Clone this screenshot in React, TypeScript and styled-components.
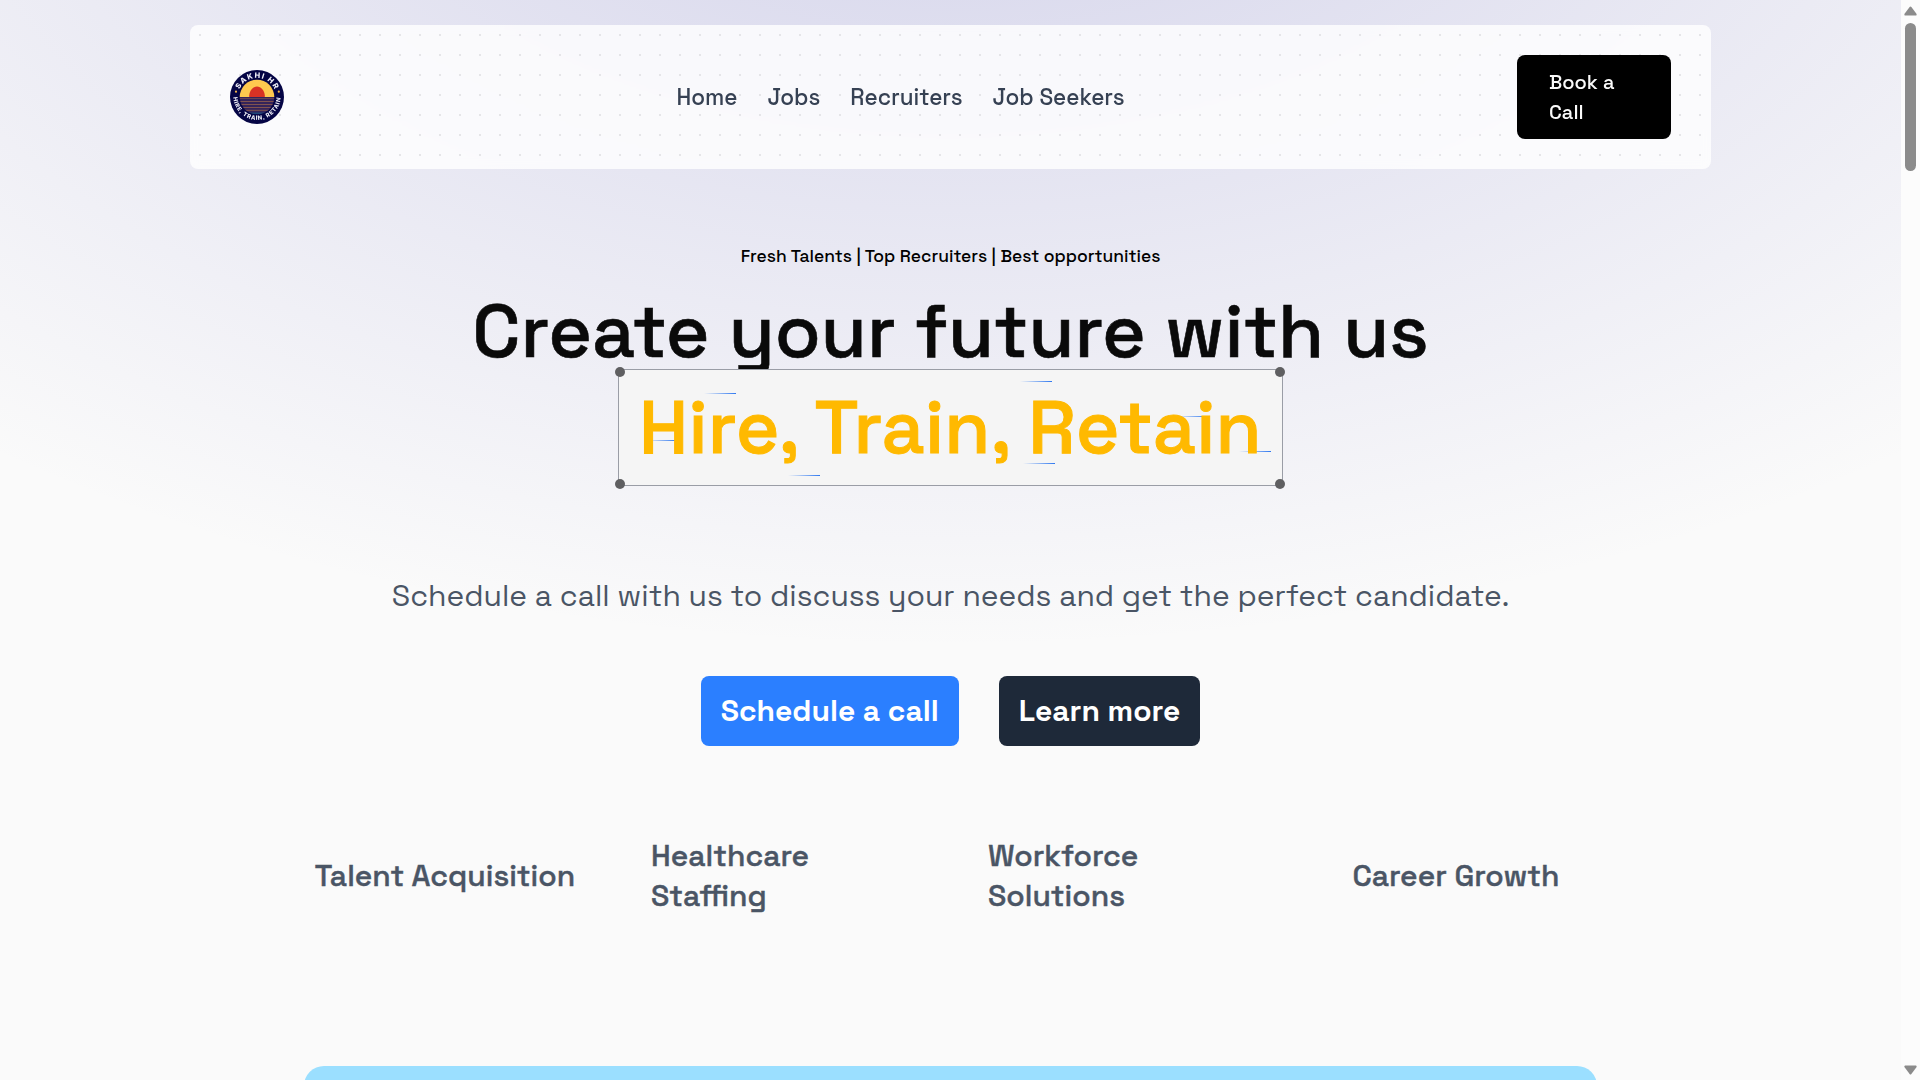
import React from 'react';
import styled, { createGlobalStyle } from 'styled-components';

const GlobalStyle = createGlobalStyle`
  *, *::before, *::after { box-sizing: border-box; }
  html, body { margin: 0; height: 100%; overflow: hidden; background: #fafafa; }
  body { font-family: 'Space Grotesk', Inter, sans-serif; color: #0a0a0a; }
  a { color: inherit; text-decoration: none; }
`;

const Shell = styled.div`
  display: grid;
  grid-template-columns: 1fr 19px;
  height: 1080px;
  overflow: hidden;
`;

const Page = styled.main`
  display: flex;
  flex-direction: column;
  align-items: center;
  height: 1080px;
  overflow: hidden;
  background:
    radial-gradient(ellipse 80% 80% at 50% -20%, rgba(120, 119, 198, 0.3), rgba(255, 255, 255, 0)),
    #fafafa;
`;

const Header = styled.header`
  display: flex;
  align-items: center;
  justify-content: space-between;
  flex: none;
  width: 1521px;
  height: 144px;
  margin-top: 25px;
  padding: 0 40px;
  border-radius: 8px;
  background:
    radial-gradient(circle at 10px 10px, #e5e5e8 1px, transparent 1px) 0 0 / 20px 20px,
    rgba(255, 255, 255, 0.8);
  backdrop-filter: blur(4px);
`;

const LogoMark = styled.svg`
  display: block;
  width: 54px;
  height: 54px;
`;

const Links = styled.nav`
  display: flex;
  gap: 30px;
  padding-top: 1px;
  font-size: 22.5px;
  font-weight: 500;
  line-height: 33px;
  color: #364153;
`;

const NavLink = styled.a`
  white-space: nowrap;
`;

const BookButton = styled.button`
  width: 154px;
  height: 84px;
  padding: 12px 32px;
  border: 0;
  border-radius: 8px;
  background: #000;
  color: #fafafa;
  font: 500 20px/30px 'Space Grotesk', Inter, sans-serif;
  text-align: left;
`;

const Hero = styled.section`
  display: flex;
  flex-direction: column;
  align-items: center;
  flex: none;
`;

const Tagline = styled.p`
  margin: 75px 0 0;
  font-size: 17.5px;
  font-weight: 500;
  line-height: 24px;
  color: #000;
`;

const Title = styled.h1`
  margin: 15px 0 0;
  font-size: 75px;
  font-weight: 500;
  line-height: 96px;
  -webkit-text-stroke: 0.6px #0a0a0a;
`;

const Frame = styled.div`
  position: relative;
  display: flex;
  align-items: center;
  justify-content: center;
  width: 665px;
  height: 117px;
  margin-top: -10px;
  padding-bottom: 1px;
  border: 1px solid #9a9da6;
  background: #f5f5f5;
`;

const Motto = styled.span`
  position: relative;
  font-size: 75px;
  font-weight: 500;
  line-height: 96px;
  letter-spacing: 0.16px;
  white-space: nowrap;
  color: #ffb900;
  -webkit-text-stroke: 1px #ffb900;
`;

const Handle = styled.i<{ $v: 'top' | 'bottom'; $h: 'left' | 'right' }>`
  position: absolute;
  ${p => p.$v}: ${p => (p.$v === 'top' ? -3 : -4)}px;
  ${p => p.$h}: ${p => (p.$h === 'left' ? -4 : -3)}px;
  width: 10px;
  height: 10px;
  border-radius: 50%;
  background: #5f5f61;
`;

const Beam = styled.i<{ $x: number; $y: number }>`
  position: absolute;
  left: ${p => p.$x}px;
  top: ${p => p.$y}px;
  width: 32px;
  height: 1px;
  background: linear-gradient(to right, transparent, #2f78f0);
`;

const Lead = styled.p`
  margin: 90px 0 0;
  font-size: 30px;
  font-weight: 400;
  line-height: 40px;
  color: #4a5565;
`;

const Actions = styled.div`
  display: flex;
  gap: 40px;
  margin-top: 60px;
`;

const Action = styled.a<{ $tone: string }>`
  height: 70px;
  padding: 15px 20px;
  border-radius: 8px;
  background: ${p => p.$tone};
  color: #fff;
  font-size: 30px;
  font-weight: 700;
  line-height: 40px;
`;

const Services = styled.div`
  display: grid;
  grid-template-columns: repeat(4, 262px);
  column-gap: 75px;
  align-items: center;
  margin-top: 90px;
  font-size: 30px;
  font-weight: 500;
  line-height: 40px;
  color: #4a5565;
  -webkit-text-stroke: 0.45px #4a5565;
`;

const Service = styled.div<{ $center?: boolean }>`
  text-align: ${p => (p.$center ? 'center' : 'left')};
  white-space: nowrap;
`;

const BlueCard = styled.section`
  flex: none;
  width: 1293px;
  height: 400px;
  margin-top: 150px;
  border-radius: 20px;
  background: #9bdfff;
`;

const ScrollTrack = styled.aside`
  display: flex;
  flex-direction: column;
  align-items: center;
  height: 1080px;
  padding: 6px 0 5px;
  background: #fcfcfc;
`;

const Arrow = styled.svg`
  display: block;
  width: 13px;
  height: 10px;
  fill: #8b8b8b;
`;

const Thumb = styled.div`
  width: 11px;
  height: 148px;
  margin: 7px 0 auto;
  border-radius: 6px;
  background: #8b8b8b;
`;

const navItems = ['Home', 'Jobs', 'Recruiters', 'Job Seekers'];

const beams = [
  { x: 85, y: 23 },
  { x: 26, y: 70 },
  { x: 169, y: 105 },
  { x: 401, y: 11 },
  { x: 404, y: 93 },
  { x: 557, y: 46 },
  { x: 620, y: 81 },
];

function Logo() {
  return (
    <LogoMark viewBox="0 0 54 54" role="img" aria-label="Sakhi HR">
      <defs>
        <path id="arcTop" d="M7.8 27a19.2 19.2 0 0 1 38.4 0" />
        <path id="arcBottom" d="M3.400 24a23.700 23.700 0 1 0 47.200 0" />
        <clipPath id="disc"><circle cx="27" cy="27" r="17.300" /></clipPath>
      </defs>
      <circle cx="27" cy="27" r="27" fill="#050545" />
      <g clipPath="url(#disc)">
        <rect x="9" y="9" width="36" height="18" fill="#ffc94f" />
        <path d="M19.200 27v-1.500C19.500 20.500 23 16.500 27 16.500s7.500 4 7.800 9V27z" fill="#d83224" />
        <rect x="9" y="27" width="36" height="18" fill="#35245a" />
        <g fill="#80534f">
          <rect x="9" y="28.200" width="36" height=".7" />
          <rect x="9" y="31" width="36" height="1" />
          <rect x="9" y="34" width="36" height="1" />
          <rect x="9" y="37" width="36" height="1" />
          <rect x="9" y="39.800" width="36" height="1" />
        </g>
        <rect x="9" y="42.600" width="36" height="1.200" fill="#174f83" />
      </g>
      <circle cx="6" cy="21.700" r="1.100" fill="#f6b84b" />
      <circle cx="48.800" cy="21.700" r="1.100" fill="#f6b84b" />
      <g fill="#f2f2fa" fontFamily="Inter, sans-serif" fontWeight="800" textAnchor="middle">
        <text fontSize="7.400" letterSpacing="1.2"><textPath href="#arcTop" startOffset="51%">SAKHI HR</textPath></text>
        <text fontSize="5.800" letterSpacing=".65"><textPath href="#arcBottom" startOffset="50%">HIRE, TRAIN, RETAIN</textPath></text>
      </g>
    </LogoMark>
  );
}

export default function App() {
  return (
    <>
      <GlobalStyle />
      <Shell>
        <Page>
          <Header>
            <Logo />
            <Links>
              {navItems.map(label => <NavLink key={label} href="#">{label}</NavLink>)}
            </Links>
            <BookButton>Book a<br />Call</BookButton>
          </Header>
          <Hero>
            <Tagline>Fresh Talents | Top Recruiters | Best opportunities</Tagline>
            <Title>Create your future with us</Title>
            <Frame>
              {beams.map(b => <Beam key={`${b.x}-${b.y}`} $x={b.x} $y={b.y} />)}
              <Motto>Hire, Train, Retain</Motto>
              <Handle $v="top" $h="left" />
              <Handle $v="top" $h="right" />
              <Handle $v="bottom" $h="left" />
              <Handle $v="bottom" $h="right" />
            </Frame>
            <Lead>Schedule a call with us to discuss your needs and get the perfect candidate.</Lead>
            <Actions>
              <Action href="#" $tone="#2b7fff">Schedule a call</Action>
              <Action href="#" $tone="#1e2939">Learn more</Action>
            </Actions>
            <Services>
              <Service $center>Talent Acquisition</Service>
              <Service>Healthcare<br />Staffing</Service>
              <Service>Workforce<br />Solutions</Service>
              <Service $center>Career Growth</Service>
            </Services>
          </Hero>
          <BlueCard />
        </Page>
        <ScrollTrack>
          <Arrow viewBox="0 0 13 10"><path d="M6.500 .5Q7 .5 7.400 1L12.600 8Q13 9.500 11.800 9.500H1.200Q0 9.500 .4 8L5.600 1Q6 .5 6.500 .5z" /></Arrow>
          <Thumb />
          <Arrow viewBox="0 0 13 10"><path d="M6.500 9.500Q7 9.500 7.400 9L12.600 2Q13 .5 11.800 .5H1.200Q0 .5 .4 2L5.600 9Q6 9.500 6.500 9.500z" /></Arrow>
        </ScrollTrack>
      </Shell>
    </>
  );
}
